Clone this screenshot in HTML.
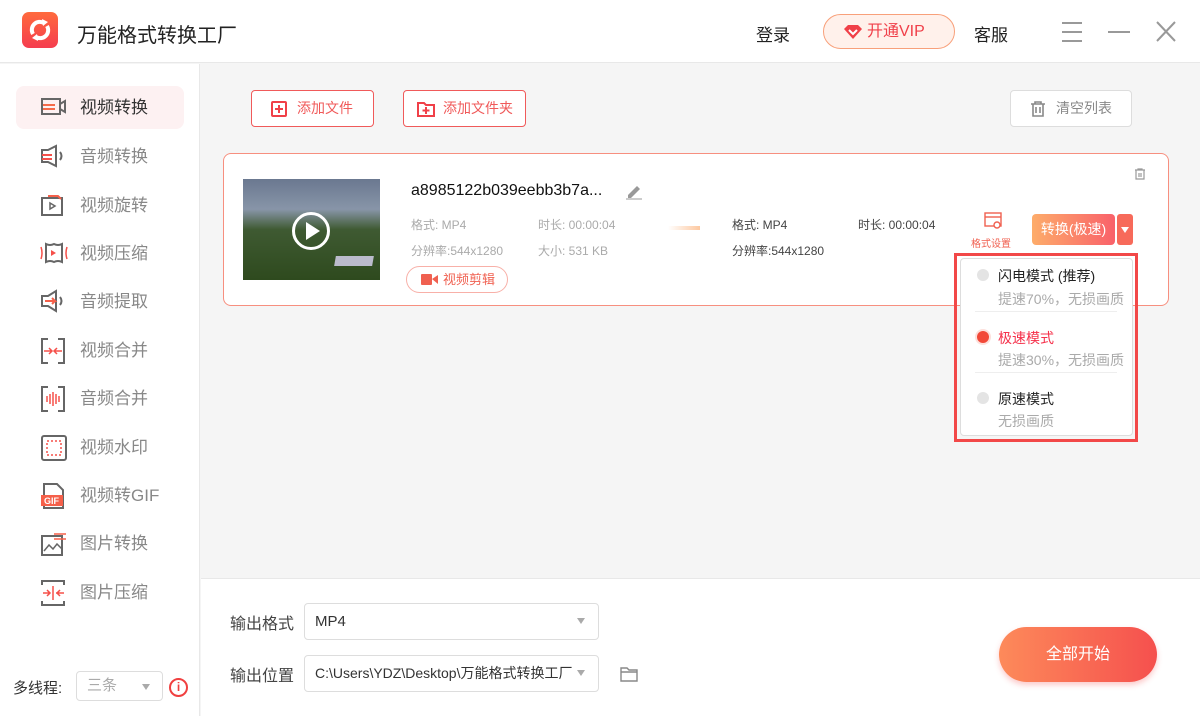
<!DOCTYPE html>
<html><head><meta charset="utf-8"><style>
*{margin:0;padding:0;box-sizing:border-box}
body{width:1200px;height:716px;overflow:hidden;background:#f5f5f5;font-family:"Liberation Sans","Noto Sans CJK SC",sans-serif;position:relative;color:#333}
.a{position:absolute}
.hdr{left:0;top:0;width:1200px;height:63px;background:#fff;border-bottom:1px solid #e8e8e8}
.side{left:0;top:64px;width:200px;height:652px;background:#fff;border-right:1px solid #e8e8e8}
.it{position:absolute;left:16px;width:168px;height:43px;font-size:17px;color:#888;line-height:43px;padding-left:64px}
.it svg{position:absolute;left:24px;top:9px}
.btn{position:absolute;height:37px;border:1px solid #f05a5a;border-radius:4px;background:#fff;color:#f05a5a;font-size:14px;line-height:35px}
.g{color:#aaa;font-size:12px}
.sel{position:absolute;background:#fff;border:1px solid #ddd;border-radius:4px;font-size:15px;line-height:35px;padding-left:10px;color:#333}
.tri{position:absolute;width:0;height:0;border-left:4px solid transparent;border-right:4px solid transparent;border-top:6px solid #aaa}
</style></head><body>
<div class="a hdr"></div>
<div class="a" style="left:22px;top:12px;width:36px;height:36px;border-radius:7px;background:linear-gradient(#ff6a3d,#f53d4f)">
<svg width="36" height="36" viewBox="0 0 36 36"><path d="M11 22a8 8 0 0 1 11-11" fill="none" stroke="#fff" stroke-width="4"/><path d="M25 14a8 8 0 0 1-11 11" fill="none" stroke="#fff" stroke-width="4"/><path d="M20 7l6 3-5 4z M16 29l-6-3 5-4z" fill="#fff"/></svg></div>
<div class="a" style="left:77px;top:19px;font-size:20px;color:#222">万能格式转换工厂</div>
<div class="a" style="left:756px;top:21px;font-size:17px;color:#222">登录</div>
<div class="a" style="left:823px;top:14px;width:132px;height:35px;border:1px solid #f8a07a;border-radius:18px;background:#fff1eb;color:#f0404a;font-size:16px;line-height:33px;padding-left:43px">开通VIP
<svg class="a" style="left:20px;top:10px" width="18" height="14" viewBox="0 0 18 14"><path d="M0 4L4 0h10l4 4-9 10z" fill="#f04048"/><path d="M5 5l4 4 4-4" stroke="#fff" stroke-width="2" fill="none"/></svg></div>
<div class="a" style="left:974px;top:21px;font-size:17px;color:#222">客服</div>
<svg class="a" style="left:1060px;top:20px" width="120" height="24"><path d="M2 3h20M2 12h20M2 21h20" stroke="#999" stroke-width="2"/><path d="M48 12h22" stroke="#999" stroke-width="2"/><path d="M97 2l18 19M115 2L97 21" stroke="#999" stroke-width="2"/></svg>

<div class="a side"></div>
<div class="it" style="top:86px;background:#fdf1f2;border-radius:8px;color:#333">视频转换<svg width="28" height="24"><rect x="2" y="4" width="18" height="15" fill="none" stroke="#666" stroke-width="2"/><path d="M20 9l5-3v11l-5-3" fill="none" stroke="#666" stroke-width="2"/><path d="M3 10h12M3 14h12" stroke="#f56b4a" stroke-width="2"/></svg></div>
<div class="it" style="top:135px">音频转换<svg width="28" height="24"><path d="M2 6h6l8-4v20l-8-4H2z" fill="none" stroke="#666" stroke-width="2"/><path d="M2 11h10M2 15h10" stroke="#f5504a" stroke-width="2"/><path d="M20 8q3 4 0 8" stroke="#666" stroke-width="2" fill="none"/></svg></div>
<div class="it" style="top:184px">视频旋转<svg width="28" height="24"><rect x="2" y="5" width="20" height="17" fill="none" stroke="#666" stroke-width="2"/><path d="M10 10l5 3-5 3z" fill="none" stroke="#666" stroke-width="1.5"/><path d="M8 3h10l3 3" stroke="#f5604a" stroke-width="2" fill="none"/></svg></div>
<div class="it" style="top:232px">视频压缩<svg width="28" height="24"><path d="M6 3q4 2 8 0q4 2 8 0v18q-4-2-8 0q-4-2-8 0z" fill="none" stroke="#666" stroke-width="2"/><path d="M11 9l5 3-5 3z" fill="#f5504a"/><path d="M1 6q2 6 0 12M27 6q-2 6 0 12" stroke="#f5504a" stroke-width="1.5" fill="none"/></svg></div>
<div class="it" style="top:280px">音频提取<svg width="28" height="24"><path d="M2 7h6l8-5v20l-8-5H2z" fill="none" stroke="#666" stroke-width="2"/><path d="M5 12h10l-3-3M15 12l-3 3" stroke="#f5604a" stroke-width="2" fill="none"/><path d="M20 8q3 4 0 8" stroke="#666" stroke-width="2" fill="none"/></svg></div>
<div class="it" style="top:329px">视频合并<svg width="28" height="26"><path d="M8 1H2v24h6M18 1h6v24h-6" fill="none" stroke="#666" stroke-width="2"/><path d="M4 13h7M15 13h7M9 10l3 3-3 3M17 10l-3 3 3 3" stroke="#f5504a" stroke-width="1.5" fill="none"/></svg></div>
<div class="it" style="top:377px">音频合并<svg width="28" height="26"><path d="M8 1H2v24h6M18 1h6v24h-6" fill="none" stroke="#666" stroke-width="2"/><path d="M7 10v6M10 8v10M13 6v14M16 8v10M19 10v6" stroke="#f5504a" stroke-width="1.5"/></svg></div>
<div class="it" style="top:426px">视频水印<svg width="28" height="26"><rect x="2" y="1" width="24" height="24" rx="2" fill="none" stroke="#666" stroke-width="2"/><rect x="7" y="6" width="14" height="14" fill="none" stroke="#f5504a" stroke-width="1.5" stroke-dasharray="2 2"/></svg></div>
<div class="it" style="top:474px">视频转GIF<svg width="28" height="26"><path d="M4 1h13l6 6v18H4z" fill="none" stroke="#666" stroke-width="2"/><rect x="1" y="12" width="22" height="11" fill="#f5604a"/><text x="4" y="21" font-size="9" fill="#fff" font-family="Liberation Sans" font-weight="bold">GIF</text></svg></div>
<div class="it" style="top:522px">图片转换<svg width="28" height="26"><rect x="2" y="5" width="20" height="19" fill="none" stroke="#666" stroke-width="2"/><path d="M4 20l5-6 4 4 4-5 5 5" stroke="#666" stroke-width="1.5" fill="none"/><path d="M14 3h12M14 8h12" stroke="#f5604a" stroke-width="1.5"/></svg></div>
<div class="it" style="top:571px">图片压缩<svg width="28" height="26"><path d="M2 5V1h22v4M2 21v4h22v-4" fill="none" stroke="#666" stroke-width="2"/><path d="M13 6v14M3 13h7M16 13h8M7 10l3 3-3 3M20 10l-3 3 3 3" stroke="#f5504a" stroke-width="1.5" fill="none"/></svg></div>
<div class="a" style="left:13px;top:677px;font-size:15px;color:#333">多线程:</div>
<div class="sel" style="left:76px;top:671px;width:87px;height:30px;line-height:28px;color:#aaa;font-size:15px">三条</div>
<div class="tri" style="left:142px;top:684px"></div>
<div class="a" style="left:169px;top:678px;width:19px;height:19px;border:2px solid #f04040;border-radius:50%;color:#f04040;font-size:12px;text-align:center;line-height:15px;font-weight:bold">i</div>

<div class="btn" style="left:251px;top:90px;width:123px;padding-left:45px">添加文件<svg class="a" style="left:19px;top:10px" width="16" height="16"><rect x="1" y="1" width="14" height="14" rx="1" fill="none" stroke="#f04048" stroke-width="2"/><path d="M8 4v8M4 8h8" stroke="#f04048" stroke-width="2"/></svg></div>
<div class="btn" style="left:403px;top:90px;width:123px;padding-left:39px">添加文件夹<svg class="a" style="left:13px;top:10px" width="18" height="16"><path d="M1 2h6l2 2h8v11H1z" fill="none" stroke="#f04048" stroke-width="2"/><path d="M9 6v7M5.5 9.5h7" stroke="#f04048" stroke-width="2"/></svg></div>
<div class="btn" style="left:1010px;top:90px;width:122px;border-color:#ddd;color:#888;padding-left:45px">清空列表<svg class="a" style="left:19px;top:10px" width="16" height="16"><path d="M1 3h14M5 3V1h6v2M3 3v12h10V3M6 6v6M10 6v6" stroke="#888" stroke-width="1.6" fill="none"/></svg></div>

<div class="a" style="left:223px;top:153px;width:946px;height:153px;background:#fff;border:1px solid #f78f7f;border-radius:8px"></div>
<div class="a" style="left:243px;top:179px;width:137px;height:101px;background:linear-gradient(#6a7890 0%,#8895a8 30%,#3f5a32 50%,#2e4a1e 100%)"></div>
<div class="a" style="left:292px;top:212px;width:38px;height:38px;border:3px solid #fff;border-radius:50%"></div>
<svg class="a" style="left:304px;top:221px" width="18" height="20"><path d="M2 1l14 9-14 9z" fill="#fff"/></svg>
<div class="a" style="left:335px;top:256px;width:38px;height:10px;background:#bbc;transform:skewX(-10deg)"></div>
<div class="a" style="left:411px;top:182px;font-size:16px;color:#111">a8985122b039eebb3b7a...</div>
<svg class="a" style="left:625px;top:183px" width="18" height="17"><path d="M3 12l9-9 3 3-9 9H3z" fill="#999"/><path d="M1 16h16" stroke="#999"/></svg>
<div class="a g" style="left:411px;top:216px">格式: MP4</div>
<div class="a g" style="left:538px;top:216px">时长: 00:00:04</div>
<div class="a g" style="left:411px;top:242px">分辨率:544x1280</div>
<div class="a g" style="left:538px;top:242px">大小: 531 KB</div>
<div class="a" style="left:406px;top:266px;width:102px;height:27px;border:1px solid #f8b0a8;border-radius:14px;color:#f06050;font-size:13px;line-height:25px;padding-left:36px">视频剪辑
<svg class="a" style="left:14px;top:6px" width="17" height="13"><rect x="0" y="1" width="11" height="11" rx="1" fill="#f06050"/><path d="M11 6l6-4v9z" fill="#f06050"/></svg></div>
<div class="a" style="left:668px;top:226px;width:32px;height:4px;background:linear-gradient(90deg,#fff,#fdc8a0)"></div>
<div class="a g" style="left:732px;top:216px;color:#444">格式: MP4</div>
<div class="a g" style="left:858px;top:216px;color:#444">时长: 00:00:04</div>
<div class="a g" style="left:732px;top:242px;color:#444">分辨率:544x1280</div>
<svg class="a" style="left:1134px;top:168px" width="12" height="12"><path d="M1 2h10M4 2V1h4v1M2 2v9h8V2M5 5v4M7 5v4" stroke="#999" stroke-width="1.2" fill="none"/></svg>
<svg class="a" style="left:984px;top:212px" width="18" height="18"><rect x="1" y="1" width="16" height="13" fill="none" stroke="#f06050" stroke-width="1.4"/><path d="M1 5h16" stroke="#f06050" stroke-width="1.4"/><circle cx="13" cy="13" r="3" fill="#fff" stroke="#f06050" stroke-width="1.4"/></svg>
<div class="a" style="left:971px;top:235px;font-size:10px;color:#f06050">格式设置</div>
<div class="a" style="left:1032px;top:214px;width:83px;height:31px;border-radius:4px;background:linear-gradient(90deg,#fdac6a,#f9616a);color:#fff;font-size:14px;line-height:31px;text-align:center">转换(极速)</div>
<div class="a" style="left:1117px;top:214px;width:16px;height:31px;border-radius:3px;background:#f76a5a"></div>
<div class="a" style="left:1121px;top:227px;border-left:4px solid transparent;border-right:4px solid transparent;border-top:6px solid #fff;width:0"></div>

<div class="a" style="left:954px;top:253px;width:184px;height:189px;border:3px solid #f24848"></div>
<div class="a" style="left:960px;top:258px;width:173px;height:178px;background:#fff;border:1px solid #ddd;border-radius:4px"></div>
<div class="a" style="left:977px;top:269px;width:12px;height:12px;border-radius:50%;background:#e4e4e4"></div>
<div class="a" style="left:998px;top:266px;font-size:14px;color:#222">闪电模式 (推荐)</div>
<div class="a" style="left:998px;top:289px;font-size:14px;color:#aaa">提速70%，无损画质</div>
<div class="a" style="left:975px;top:311px;width:142px;height:1px;background:#eee"></div>
<div class="a" style="left:977px;top:331px;width:12px;height:12px;border-radius:50%;background:#f24838;box-shadow:0 0 0 2px #fde0dc"></div>
<div class="a" style="left:998px;top:328px;font-size:14px;color:#f5304a">极速模式</div>
<div class="a" style="left:998px;top:350px;font-size:14px;color:#aaa">提速30%，无损画质</div>
<div class="a" style="left:975px;top:372px;width:142px;height:1px;background:#eee"></div>
<div class="a" style="left:977px;top:392px;width:12px;height:12px;border-radius:50%;background:#e4e4e4"></div>
<div class="a" style="left:998px;top:389px;font-size:14px;color:#222">原速模式</div>
<div class="a" style="left:998px;top:411px;font-size:14px;color:#aaa">无损画质</div>

<div class="a" style="left:201px;top:578px;width:999px;height:138px;background:#fff;border-top:1px solid #e8e8e8"></div>
<div class="a" style="left:230px;top:610px;font-size:16px;color:#444">输出格式</div>
<div class="sel" style="left:304px;top:603px;width:295px;height:37px">MP4</div>
<div class="tri" style="left:577px;top:618px"></div>
<div class="a" style="left:230px;top:662px;font-size:16px;color:#444">输出位置</div>
<div class="sel" style="left:304px;top:655px;width:295px;height:37px;font-size:14px;overflow:hidden;white-space:nowrap;padding-right:22px">C:\Users\YDZ\Desktop\万能格式转换工厂</div>
<div class="tri" style="left:577px;top:670px"></div>
<svg class="a" style="left:620px;top:666px" width="18" height="16"><path d="M1 2h6l2 2h8v11H1z M1 6h16" fill="none" stroke="#888" stroke-width="1.4"/></svg>
<div class="a" style="left:999px;top:627px;width:158px;height:55px;border-radius:28px;background:linear-gradient(90deg,#fd8a5a,#f5504e);color:#fff;font-size:16px;line-height:55px;text-align:center;box-shadow:0 3px 6px rgba(245,80,78,.3)">全部开始</div>
</body></html>
